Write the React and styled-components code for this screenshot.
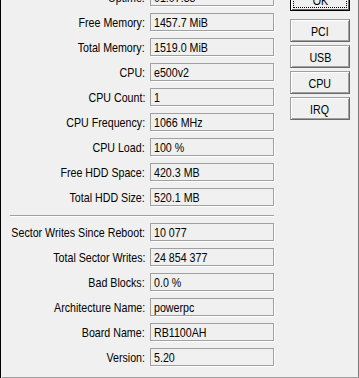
import React from "react";
import styled, { createGlobalStyle } from "styled-components";

const Global = createGlobalStyle`
  html, body { margin: 0; padding: 0; background: #f0f0f0; }
  body { width: 359px; height: 378px; overflow: hidden; }
`;

const FONT = `"Liberation Sans", Arial, sans-serif`;

const Frame = styled.div`
  width: 359px;
  height: 378px;
  box-sizing: border-box;
  border-left: 1px solid #000;
  padding-left: 1px;
  display: flex;
  background: #f0f0f0;
  font-family: ${FONT};
  font-size: 13px;
  color: #000;
`;

const Panel = styled.div`
  flex: 1;
  height: 378px;
  box-sizing: border-box;
  border-right: 1px solid #7a7a7a;
  border-bottom: 1px solid #a0a0a0;
  overflow: hidden;
`;

const Content = styled.div`
  display: flex;
  align-items: flex-start;
  gap: 16px;
  padding: 0 8px;
  margin-top: -12px;
`;

const FormColumn = styled.div`
  display: flex;
  flex-direction: column;
  width: 264px;
`;

const Form = styled.div`
  display: grid;
  grid-template-columns: 135px 124px;
  column-gap: 5px;
  row-gap: 6px;
  grid-auto-rows: 19px;
`;

/* narrow dialog font: scaled horizontally */
const Narrow = styled.span`
  display: inline-block;
  white-space: nowrap;
  transform: scaleX(0.82);
  transform-origin: ${(p) => p.$origin || "left"} center;
`;

const Label = styled.div`
  justify-self: end;
  height: 18px;
  line-height: 20px;
  white-space: nowrap;
`;

const Value = styled.div`
  box-sizing: border-box;
  height: 18px;
  border: 1px solid #a0a0a0;
  box-shadow: 1px 1px 0 #ffffff;
  padding: 0 3px;
  line-height: 18px;
  white-space: nowrap;
`;

const Separator = styled.div`
  height: 2px;
  margin: 8px 0 6px;
  box-sizing: border-box;
  border-top: 1px solid #a0a0a0;
  border-bottom: 1px solid #ffffff;
`;

const Buttons = styled.div`
  display: flex;
  flex-direction: column;
  gap: 3px;
  width: 60px;
`;

const Button = styled.button`
  position: relative;
  box-sizing: border-box;
  width: 60px;
  height: 23px;
  margin: 0 0 ${(p) => (p.$default ? "5px" : "0")};
  padding: 1px 0 0;
  background: #f0f0f0;
  font-family: ${FONT};
  font-size: 13px;
  color: #000;
  border: 1px solid;
  border-color: ${(p) =>
    p.$default ? "#000" : "#a0a0a0 #696969 #696969 #a0a0a0"};
  box-shadow: ${(p) =>
    p.$default
      ? "inset 1px 1px 0 #fff, inset -1px -1px 0 #696969"
      : "inset 1px 1px 0 #fff, inset -1px -1px 0 #a0a0a0"};
  outline: none;

  &::after {
    content: "";
    display: ${(p) => (p.$default ? "block" : "none")};
    position: absolute;
    inset: 2px;
    border: 1px dotted #000;
  }
`;

const rowsA = [
  ["Uptime:", "01:07:38"],
  ["Free Memory:", "1457.7 MiB"],
  ["Total Memory:", "1519.0 MiB"],
  ["CPU:", "e500v2"],
  ["CPU Count:", "1"],
  ["CPU Frequency:", "1066 MHz"],
  ["CPU Load:", "100 %"],
  ["Free HDD Space:", "420.3 MB"],
  ["Total HDD Size:", "520.1 MB"],
];

const rowsB = [
  ["Sector Writes Since Reboot:", "10 077"],
  ["Total Sector Writes:", "24 854 377"],
  ["Bad Blocks:", "0.0 %"],
  ["Architecture Name:", "powerpc"],
  ["Board Name:", "RB1100AH"],
  ["Version:", "5.20"],
];

const Fields = ({ rows }) => (
  <Form>
    {rows.map(([l, v]) => (
      <React.Fragment key={l}>
        <Label>
          <Narrow $origin="right">{l}</Narrow>
        </Label>
        <Value>
          <Narrow $origin="left">{v}</Narrow>
        </Value>
      </React.Fragment>
    ))}
  </Form>
);

export default function App() {
  return (
    <>
      <Global />
      <Frame>
        <Panel>
          <Content>
            <FormColumn>
              <Fields rows={rowsA} />
              <Separator />
              <Fields rows={rowsB} />
            </FormColumn>
            <Buttons>
              {["OK", "PCI", "USB", "CPU", "IRQ"].map((b, i) => (
                <Button key={b} $default={i === 0}>
                  <Narrow $origin="center">{b}</Narrow>
                </Button>
              ))}
            </Buttons>
          </Content>
        </Panel>
      </Frame>
    </>
  );
}
